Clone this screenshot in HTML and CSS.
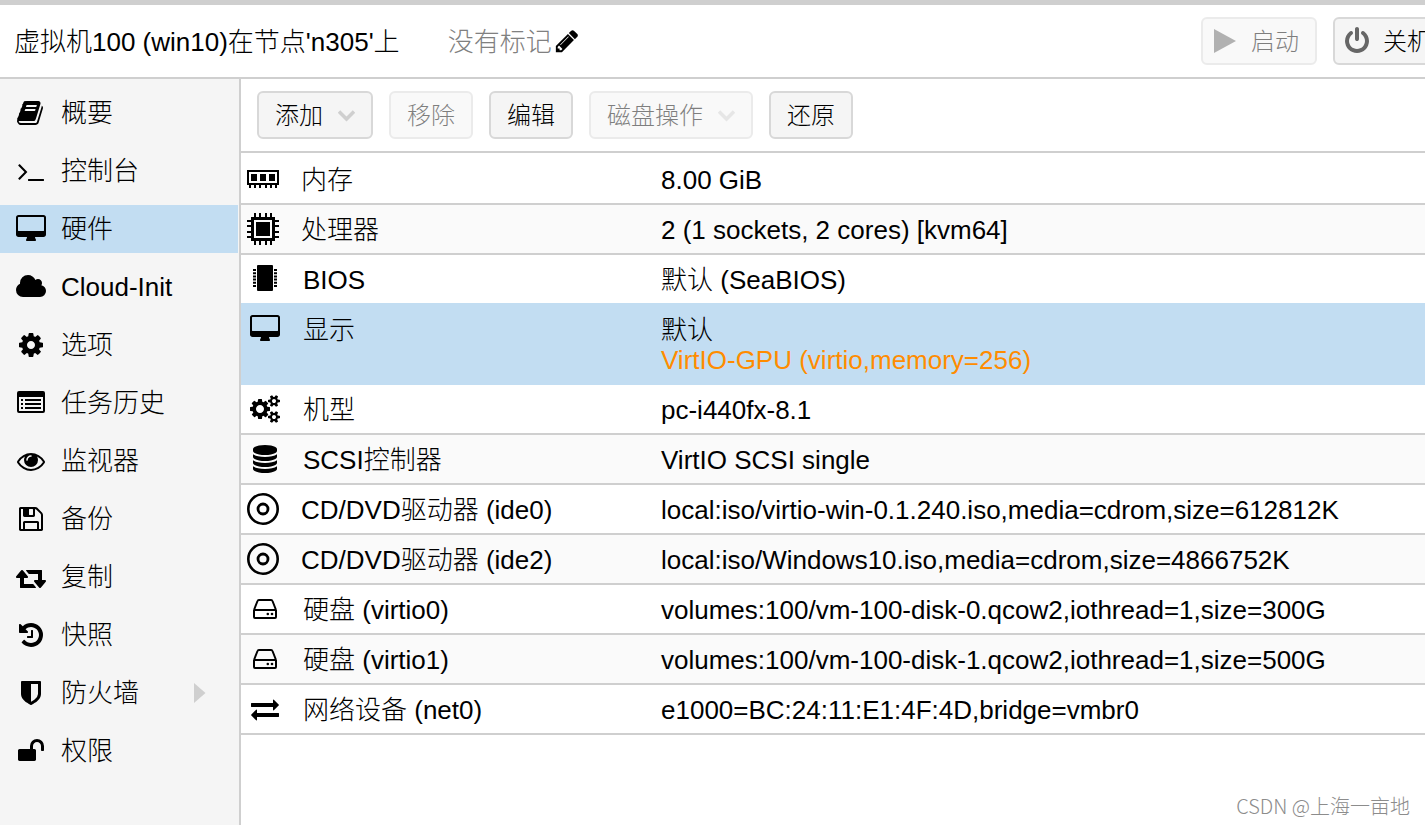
FILE: index.html
```html
<!DOCTYPE html>
<html lang="zh-CN">
<head>
<meta charset="utf-8">
<meta name="viewport" content="width=device-width, initial-scale=1">
<title>虚拟机100 - 硬件</title>
<link rel="stylesheet" href="styles.css">
</head>
<body>
<svg class="sprite" aria-hidden="true">
  <symbol id="i-book" viewBox="0 0 1792 1792"><path d="M1639 478q40 57 18 129l-275 906q-19 64-76.5 107.5t-122.5 43.5h-923q-77 0-148.5-53.5t-99.5-131.5q-24-67-2-127 0-4 3-27t4-37q1-8-3-21.5t-3-19.5q2-11 8-21t16.5-23.5 16.5-23.5q23-38 45-91.5t30-91.5q3-10 .5-30t-.5-28q3-11 17-28t17-23q21-36 42-92t25-90q1-9-2.5-32t.5-28q4-13 22-30.5t22-22.5q19-26 42.5-84.5t27.5-96.5q1-8-3-25.5t-2-26.5q2-8 9-18t18-23 17-21q8-12 16.5-30.5t15-35 16-36 19.5-32 26.5-23.5 36-11.5 47.5 5.5l-1 3q38-9 51-9h761q74 0 114 56t18 130l-274 906q-36 119-71.5 153.5t-128.5 34.5h-869q-27 0-38 15-11 16-1 43 24 70 144 70h923q29 0 56-15.5t35-41.5l300-987q7-22 5-57 38 15 59 43zm-1064 2q-4 13 2 22.5t20 9.5h608q13 0 25.5-9.5t16.5-22.5l21-64q4-13-2-22.5t-20-9.5h-608q-13 0-25.5 9.5t-16.5 22.5zm-83 256q-4 13 2 22.5t20 9.5h608q13 0 25.5-9.5t16.5-22.5l21-64q4-13-2-22.5t-20-9.5h-608q-13 0-25.5 9.5t-16.5 22.5z"/></symbol>
  <symbol id="i-terminal" viewBox="0 0 1792 1792"><path d="M649 983l-466 466q-10 10-23 10t-23-10l-50-50q-10-10-10-23t10-23l393-393-393-393q-10-10-10-23t10-23l50-50q10-10 23-10t23 10l466 466q10 10 10 23t-10 23zm1079 457v64q0 14-9 23t-23 9h-960q-14 0-23-9t-9-23v-64q0-14 9-23t23-9h960q14 0 23 9t9 23z"/></symbol>
  <symbol id="i-desktop" viewBox="-64 0 1920 1792"><path d="M1728 992v-832q0-13-9.500-22.500t-22.500-9.500h-1600q-13 0-22.500 9.500t-9.500 22.500v832q0 13 9.500 22.500t22.500 9.500h1600q13 0 22.500-9.500t9.500-22.500zm128-832v1088q0 66-47 113t-113 47h-544q0 37 16 77.500t32 71 16 43.500q0 26-19 45t-45 19h-512q-26 0-45-19t-19-45q0-14 16-44t32-70 16-78h-544q-66 0-113-47t-47-113v-1088q0-66 47-113t113-47h1600q66 0 113 47t47 113z"/></symbol>
  <symbol id="i-cloud" viewBox="-64 0 1920 1792"><path d="M1856 1152q0 159-112.5 271.5t-271.500 112.500h-1088q-185 0-316.500-131.500t-131.500-316.500q0-132 71-241.500t187-163.500q-2-28-2-43 0-212 150-362t362-150q158 0 286.500 88t187.500 230q70-62 166-62 106 0 181 75t75 181q0 75-41 138 129 30 213 134.500t84 239.500z"/></symbol>
  <symbol id="i-cog" viewBox="0 0 1792 1792"><path d="M1152 896q0-106-75-181t-181-75-181 75-75 181 75 181 181 75 181-75 75-181zm512-109v222q0 12-8 23t-20 13l-185 28q-19 54-39 91 35 50 107 138 10 12 10 25t-9 23q-27 37-99 108t-94 71q-12 0-26-9l-138-108q-44 23-91 38-16 136-29 186-7 28-36 28h-222q-14 0-24.500-8.500t-11.500-21.500l-28-184q-49-16-90-37l-141 107q-10 9-25 9-14 0-25-11-126-114-165-168-7-10-7-23 0-12 8-23 15-21 51-66.500t54-70.500q-27-50-41-99l-183-27q-13-2-21-12.500t-8-23.500v-222q0-12 8-23t19-13l186-28q14-46 39-92-40-57-107-138-10-12-10-24 0-10 9-23 26-36 98.500-107.500t94.500-71.500q13 0 26 10l138 107q44-23 91-38 16-136 29-186 7-28 36-28h222q14 0 24.500 8.500t11.500 21.500l28 184q49 16 90 37l142-107q9-9 24-9 13 0 25 10 129 119 165 170 7 8 7 22 0 12-8 23-15 21-51 66.500t-54 70.500q26 50 41 98l183 28q13 2 21 12.500t8 23.500z"/></symbol>
  <symbol id="i-list" viewBox="0 0 28 28"><path fill-rule="evenodd" d="M2 2h24a2 2 0 0 1 2 2v18a2 2 0 0 1-2 2H2a2 2 0 0 1-2-2V4a2 2 0 0 1 2-2zM2 8v13.500a.5.5 0 0 0 .5.5h23a.5.5 0 0 0 .5-.5V8z"/><path d="M4 10h2v2H4zM4 14h2v2H4zM4 18h2v2H4zM8 10h16v2H8zM8 14h16v2H8zM8 18h16v2H8z"/></symbol>
  <symbol id="i-eye" viewBox="0 0 1792 1792"><path d="M1664 960q-152-236-381-353 61 104 61 225 0 185-131.500 316.500t-316.500 131.500-316.500-131.500-131.500-316.500q0-121 61-225-229 117-381 353 133 205 333.500 326.500t434.500 121.500 434.500-121.500 333.500-326.500zm-720-384q0-20-14-34t-34-14q-125 0-214.500 89.500t-89.500 214.500q0 20 14 34t34 14 34-14 14-34q0-86 61-147t147-61q20 0 34-14t14-34zm848 384q0 34-20 69-140 230-376.500 368.500t-499.500 138.500-499.500-139-376.500-368q-20-35-20-69t20-69q140-229 376.500-368t499.500-139 499.500 139 376.500 368q20 35 20 69z"/></symbol>
  <symbol id="i-floppy" viewBox="0 0 1792 1792"><path d="M512 1536h768v-384h-768v384zm896 0h128v-896q0-14-10-38.500t-20-34.500l-281-281q-10-10-34-20t-39-10v416q0 40-28 68t-68 28h-576q-40 0-68-28t-28-68v-416h-128v1280h128v-416q0-40 28-68t68-28h832q40 0 68 28t28 68v416zm-384-928v-320q0-13-9.500-22.500t-22.500-9.500h-192q-13 0-22.500 9.500t-9.500 22.500v320q0 13 9.500 22.500t22.500 9.500h192q13 0 22.500-9.500t9.500-22.500zm640 32v928q0 40-28 68t-68 28h-1344q-40 0-68-28t-28-68v-1344q0-40 28-68t68-28h928q40 0 88 20t76 48l280 280q28 28 48 76t20 88z"/></symbol>
  <symbol id="i-retweet" viewBox="-64 0 1920 1792"><path d="M1216 1568q0 13-9.500 22.500t-22.500 9.500h-960q-8 0-13.500-2t-9-7-5.500-8-3-11.500-1-11.500v-600h-192q-26 0-45-19t-19-45q0-24 15-41l320-384q19-22 49-22t49 22l320 384q15 17 15 41 0 26-19 45t-45 19h-192v384h576q16 0 25 11l160 192q7 10 7 21zm640-416q0 24-15 41l-320 384q-20 23-49 23t-49-23l-320-384q-15-17-15-41 0-26 19-45t45-19h192v-384h-576q-16 0-25-12l-160-192q-7-9-7-20 0-13 9.500-22.500t22.500-9.500h960q8 0 13.500 2t9 7 5.500 8 3 11.500 1 11.500v600h192q26 0 45 19t19 45z"/></symbol>
  <symbol id="i-history" viewBox="0 0 1792 1792"><path d="M1664 896q0 156-61 298t-164 245-245 164-298 61q-172 0-327-72.500t-264-204.500q-7-10-6.500-22.500t8.500-20.500l137-138q10-9 25-9 16 2 23 12 73 95 179 147t225 52q104 0 198.500-40.500t163.500-109.500 109.500-163.500 40.500-198.500-40.500-198.500-109.500-163.500-163.500-109.500-198.500-40.500q-98 0-188 35.500t-160 101.500l137 138q31 30 14 69-17 40-59 40h-448q-26 0-45-19t-19-45v-448q0-42 40-59 39-17 69 14l130 129q107-101 244.500-156.500t284.500-55.500q156 0 298 61t245 164 164 245 61 298zm-640-288v448q0 14-9 23t-23 9h-320q-14 0-23-9t-9-23v-64q0-14 9-23t23-9h224v-352q0-14 9-23t23-9h64q14 0 23 9t9 23z"/></symbol>
  <symbol id="i-shield" viewBox="0 0 1792 1792"><path d="M1344 960v-640h-448v1137q119-63 213-137 235-184 235-360zm192-768v768q0 86-33.500 170.500t-83 150-118 127.500-126.500 103-121 77.500-89.500 49.500-42.500 20q-12 6-26 6t-26-6q-16-7-42.500-20t-89.500-49.500-121-77.500-126.500-103-118-127.500-83-150-33.500-170.500v-768q0-26 19-45t45-19h1152q26 0 45 19t19 45z"/></symbol>
  <symbol id="i-unlock" viewBox="0 0 1792 1792"><path d="M1728 576v256q0 26-19 45t-45 19h-64q-26 0-45-19t-19-45v-256q0-106-75-181t-181-75-181 75-75 181v192h96q40 0 68 28t28 68v576q0 40-28 68t-68 28h-960q-40 0-68-28t-28-68v-576q0-40 28-68t68-28h672v-192q0-185 131.500-316.500t316.500-131.500 316.500 131.500 131.500 316.500z"/></symbol>
  <symbol id="i-pencil" viewBox="0 0 1792 1792"><path d="M491 1536l91-91-235-235-91 91v107h128v128h107zm523-928q0-22-22-22-10 0-17 7l-542 542q-7 7-7 17 0 22 22 22 10 0 17-7l542-542q7-7 7-17zm-54-192l416 416-832 832h-416v-416zm683 96q0 53-37 90l-166 166-416-416 166-165q36-38 90-38 53 0 91 38l235 234q37 39 37 91z"/></symbol>
  <symbol id="i-power" viewBox="0 0 1792 1792"><path d="M1664 896q0 156-61 298t-164 245-245 164-298 61-298-61-245-164-164-245-61-298q0-182 80.500-343t226.500-270q43-32 95.500-25t83.500 50q32 42 24.500 94.500t-49.500 84.500q-98 74-151.500 181t-53.500 228q0 104 40.500 198.500t109.500 163.500 163.500 109.500 198.500 40.500 198.500-40.500 163.500-109.500 109.500-163.500 40.500-198.500q0-121-53.500-228t-151.500-181q-42-32-49.500-84.500t24.500-94.500q31-43 84-50t95 25q146 109 226.500 270t80.500 343zm-640-768v640q0 52-38 90t-90 38-90-38-38-90v-640q0-52 38-90t90-38 90 38 38 90z"/></symbol>
  <symbol id="i-play" viewBox="0 0 28 28"><path d="M3 2l22 12L3 26z"/></symbol>
  <symbol id="i-cogs" viewBox="-64 0 1920 1792"><path d="M832 896q0-106-75-181t-181-75-181 75-75 181 75 181 181 75 181-75 75-181zm768 512q0-52-38-90t-90-38-90 38-38 90q0 53 37.500 90.500t90.500 37.500 90.500-37.500 37.500-90.500zm0-1024q0-52-38-90t-90-38-90 38-38 90q0 53 37.500 90.500t90.500 37.500 90.500-37.500 37.500-90.500zm-384 421v185q0 10-7 19.500t-16 10.500l-155 24q-11 35-32 76 34 48 90 115 7 11 7 20 0 12-7 19-23 30-82.500 89.500t-78.500 59.500q-11 0-21-7l-115-90q-37 19-77 31-11 108-23 155-7 24-30 24h-186q-11 0-20-7.500t-10-17.500l-23-153q-34-10-75-31l-118 89q-7 7-20 7-11 0-21-8-144-133-144-160 0-9 7-19 10-14 41-53t47-61q-23-44-35-82l-152-24q-10-1-17-9.500t-7-19.500v-185q0-10 7-19.500t16-10.500l155-24q11-35 32-76-34-48-90-115-7-11-7-20 0-12 7-20 22-30 82-89t79-59q11 0 21 7l115 90q34-18 77-32 11-108 23-154 7-24 30-24h186q11 0 20 7.500t10 17.500l23 153q34 10 75 31l118-89q8-7 20-7 11 0 21 8 144 133 144 160 0 8-7 19-12 16-42 54t-45 60q23 48 34 82l152 23q10 2 17 10.500t7 19.500zm640 533v140q0 16-149 31-12 27-30 52 51 113 51 138 0 4-4 7-122 71-124 71-8 0-46-47t-52-68q-20 2-30 2t-30-2q-14 21-52 68t-46 47q-2 0-124-71-4-3-4-7 0-25 51-138-18-25-30-52-149-15-149-31v-140q0-16 149-31 13-29 30-52-51-113-51-138 0-4 4-7 4-2 35-20t59-34 30-16q8 0 46 46.500t52 67.500q20-2 30-2t30 2q51-71 92-112l6-2q4 0 124 70 4 3 4 7 0 25-51 138 17 23 30 52 149 15 149 31zm0-1024v140q0 16-149 31-12 27-30 52 51 113 51 138 0 4-4 7-122 71-124 71-8 0-46-47t-52-68q-20 2-30 2t-30-2q-14 21-52 68t-46 47q-2 0-124-71-4-3-4-7 0-25 51-138-18-25-30-52-149-15-149-31v-140q0-16 149-31 13-29 30-52-51-113-51-138 0-4 4-7 4-2 35-20t59-34 30-16q8 0 46 46.500t52 67.500q20-2 30-2t30 2q51-71 92-112l6-2q4 0 124 70 4 3 4 7 0 25-51 138 17 23 30 52 149 15 149 31z"/></symbol>
  <symbol id="i-database" viewBox="0 0 1792 1792"><path d="M896 768q237 0 443-43t325-127v170q0 69-103 128t-280 93.500-385 34.500-385-34.500-280-93.500-103-128v-170q119 84 325 127t443 43zm0 768q237 0 443-43t325-127v170q0 69-103 128t-280 93.500-385 34.500-385-34.500-280-93.500-103-128v-170q119 84 325 127t443 43zm0-384q237 0 443-43t325-127v170q0 69-103 128t-280 93.500-385 34.500-385-34.500-280-93.500-103-128v-170q119 84 325 127t443 43zm0-1152q208 0 385 34.500t280 93.500 103 128v128q0 69-103 128t-280 93.500-385 34.500-385-34.500-280-93.500-103-128v-128q0-69 103-128t280-93.500 385-34.500z"/></symbol>
  <symbol id="i-exchange" viewBox="0 0 1792 1792"><path d="M1792 1184v192q0 13-9.500 22.500t-22.500 9.500h-1376v192q0 13-9.500 22.500t-22.500 9.500q-12 0-24-10l-319-320q-9-9-9-22 0-14 9-23l320-320q9-9 23-9 13 0 22.500 9.500t9.500 22.500v192h1376q13 0 22.500 9.500t9.500 22.500zm0-544q0 14-9 23l-320 320q-9 9-23 9-13 0-22.500-9.500t-9.500-22.500v-192h-1376q-13 0-22.500-9.500t-9.500-22.500v-192q0-13 9.500-22.500t22.500-9.500h1376v-192q0-14 9-23t23-9q12 0 24 10l319 319q9 9 9 23z"/></symbol>
  <symbol id="i-hdd" viewBox="0 0 28 28"><path fill="none" stroke="currentColor" stroke-width="2" stroke-linejoin="round" d="M3 15h22v7a1 1 0 0 1-1 1H4a1 1 0 0 1-1-1zL6.500 6A1.500 1.500 0 0 1 8 5h12a1.500 1.500 0 0 1 1.500 1L25 15"/><circle cx="16.800" cy="19" r="1.300"/><circle cx="21" cy="19" r="1.300"/></symbol>
  <symbol id="i-chip" viewBox="0 0 28 28"><rect x="6" width="16" height="26" rx="1"/><path d="M2 4h3v2H2zM2 7.200h3v2H2zM2 10.400h3v2H2zM2 13.600h3v2H2zM2 16.800h3v2H2zM2 20h3v2H2zM23 4h3v2h-3zM23 7.200h3v2h-3zM23 10.400h3v2h-3zM23 13.600h3v2h-3zM23 16.800h3v2h-3zM23 20h3v2h-3z"/></symbol>
  <symbol id="i-memory" viewBox="0 0 32 32"><path fill-rule="evenodd" d="M0 7h32v15H0zM2 9v11h28V9z"/><path d="M4 11h6v7H4zM13 11h6v7h-6zM22 11h6v7h-6zM2 22h2v3H2zM7 22h2v3H7zM12 22h2v3h-2zM18 22h2v3h-2zM23 22h2v3h-2zM28 22h2v3h-2z"/></symbol>
  <symbol id="i-cpu" viewBox="0 0 32 32"><path fill-rule="evenodd" d="M4 4h24v24H4zM7 7v18h18V7z"/><path d="M9 9h14v14H9zM7 0h2v5H7zM12 0h2v5h-2zM18 0h2v5h-2zM23 0h2v5h-2zM7 27h2v5H7zM12 27h2v5h-2zM18 27h2v5h-2zM23 27h2v5h-2zM0 7h5v2H0zM0 12h5v2H0zM0 18h5v2H0zM0 23h5v2H0zM27 7h5v2h-5zM27 12h5v2h-5zM27 18h5v2h-5zM27 23h5v2h-5z"/></symbol>
  <symbol id="i-disc" viewBox="0 0 32 32"><g fill="none" stroke="currentColor"><circle cx="16" cy="16" r="14.700" stroke-width="2.600"/><circle cx="16" cy="16" r="5" stroke-width="2.800"/></g></symbol>
  <symbol id="i-chevron" viewBox="0 0 17 12"><path fill="none" stroke="currentColor" stroke-width="3.500" d="M1 1.500l7.500 7.500L16 1.500"/></symbol>
  <symbol id="i-caret" viewBox="0 0 12 20"><path d="M0 0l11.500 10L0 20z"/></symbol>
</svg>

<header class="header">
  <h1 class="title">虚拟机100 (win10)在节点'n305'上</h1>
  <div class="tags">
    <span class="tags-empty">没有标记</span>
    <button class="tag-edit" type="button" aria-label="编辑标记"><svg><use href="#i-pencil"/></svg></button>
  </div>
  <div class="actions">
    <button class="btn btn-icon" type="button" disabled><svg class="icon"><use href="#i-play"/></svg>启动</button>
    <button class="btn btn-icon" type="button"><svg class="icon"><use href="#i-power"/></svg>关机</button>
  </div>
</header>

<div class="body">
  <nav class="sidebar">
    <a class="nav-item" href="#summary"><svg class="icon"><use href="#i-book"/></svg>概要</a>
    <a class="nav-item" href="#console"><svg class="icon"><use href="#i-terminal"/></svg>控制台</a>
    <a class="nav-item selected" href="#hardware" aria-current="page"><svg class="icon"><use href="#i-desktop"/></svg>硬件</a>
    <a class="nav-item" href="#cloudinit"><svg class="icon"><use href="#i-cloud"/></svg>Cloud-Init</a>
    <a class="nav-item" href="#options"><svg class="icon"><use href="#i-cog"/></svg>选项</a>
    <a class="nav-item" href="#tasks"><svg class="icon"><use href="#i-list"/></svg>任务历史</a>
    <a class="nav-item" href="#monitor"><svg class="icon"><use href="#i-eye"/></svg>监视器</a>
    <a class="nav-item" href="#backup"><svg class="icon"><use href="#i-floppy"/></svg>备份</a>
    <a class="nav-item" href="#replication"><svg class="icon"><use href="#i-retweet"/></svg>复制</a>
    <a class="nav-item" href="#snapshots"><svg class="icon"><use href="#i-history"/></svg>快照</a>
    <a class="nav-item" href="#firewall"><svg class="icon"><use href="#i-shield"/></svg>防火墙<svg class="caret"><use href="#i-caret"/></svg></a>
    <a class="nav-item" href="#permissions"><svg class="icon"><use href="#i-unlock"/></svg>权限</a>
  </nav>

  <main class="main">
    <div class="toolbar">
      <button class="btn" type="button">添加<svg class="chevron"><use href="#i-chevron"/></svg></button>
      <button class="btn" type="button" disabled>移除</button>
      <button class="btn" type="button">编辑</button>
      <button class="btn" type="button" disabled>磁盘操作<svg class="chevron"><use href="#i-chevron"/></svg></button>
      <button class="btn" type="button">还原</button>
    </div>
    <div class="grid">
      <table class="table">
        <tbody>
          <tr><th scope="row"><span class="name wide"><svg class="icon"><use href="#i-memory"/></svg>内存</span></th><td>8.00 GiB</td></tr>
          <tr><th scope="row"><span class="name wide"><svg class="icon"><use href="#i-cpu"/></svg>处理器</span></th><td>2 (1 sockets, 2 cores) [kvm64]</td></tr>
          <tr class="before-selected"><th scope="row"><span class="name"><svg class="icon"><use href="#i-chip"/></svg>BIOS</span></th><td>默认 (SeaBIOS)</td></tr>
          <tr class="selected"><th scope="row"><span class="name"><svg class="icon"><use href="#i-desktop"/></svg>显示</span></th><td>默认<div class="pending">VirtIO-GPU (virtio,memory=256)</div></td></tr>
          <tr><th scope="row"><span class="name"><svg class="icon"><use href="#i-cogs"/></svg>机型</span></th><td>pc-i440fx-8.1</td></tr>
          <tr><th scope="row"><span class="name"><svg class="icon"><use href="#i-database"/></svg>SCSI控制器</span></th><td>VirtIO SCSI single</td></tr>
          <tr><th scope="row"><span class="name wide"><svg class="icon"><use href="#i-disc"/></svg>CD/DVD驱动器 (ide0)</span></th><td>local:iso/virtio-win-0.1.240.iso,media=cdrom,size=612812K</td></tr>
          <tr><th scope="row"><span class="name wide"><svg class="icon"><use href="#i-disc"/></svg>CD/DVD驱动器 (ide2)</span></th><td>local:iso/Windows10.iso,media=cdrom,size=4866752K</td></tr>
          <tr><th scope="row"><span class="name"><svg class="icon"><use href="#i-hdd"/></svg>硬盘 (virtio0)</span></th><td>volumes:100/vm-100-disk-0.qcow2,iothread=1,size=300G</td></tr>
          <tr><th scope="row"><span class="name"><svg class="icon"><use href="#i-hdd"/></svg>硬盘 (virtio1)</span></th><td>volumes:100/vm-100-disk-1.qcow2,iothread=1,size=500G</td></tr>
          <tr><th scope="row"><span class="name"><svg class="icon"><use href="#i-exchange"/></svg>网络设备 (net0)</span></th><td>e1000=BC:24:11:E1:4F:4D,bridge=vmbr0</td></tr>
        </tbody>
      </table>
    </div>
  </main>
</div>
<div class="watermark">CSDN @上海一亩地</div>
</body>
</html>
```
FILE: styles.css
```css
* {
  box-sizing: border-box;
}

body {
  margin: 0;
  min-height: 100vh;
  display: flex;
  flex-direction: column;
  background: #fff;
  color: #000;
  font: 300 26px/30px "Liberation Sans", "Noto Sans CJK SC", sans-serif;
}

svg {
  display: block;
  flex: none;
  fill: currentColor;
}

.sprite {
  position: absolute;
  width: 0;
  height: 0;
}

.icon {
  width: 30px;
  height: 28px;
}

/* Header */
.header {
  display: flex;
  align-items: center;
  height: 79px;
  padding-left: 14px;
  border-top: 5px solid #cfcfcf;
  border-bottom: 2px solid #cfcfcf;
  white-space: nowrap;
}

.title {
  margin: 0;
  padding-top: 2px;
  font: inherit;
}

.tags {
  display: flex;
  align-items: center;
  margin-left: 48px;
}

.tags-empty {
  padding-top: 2px;
  color: #808080;
}

.tag-edit {
  padding: 0 2px;
  border: 0;
  background: none;
  color: #000;
}

.tag-edit svg {
  width: 26px;
  height: 26px;
}

.actions {
  display: flex;
  gap: 16px;
  flex: none;
  width: 224px;
  margin-left: auto;
  overflow: hidden;
}

/* Buttons */
.btn {
  display: flex;
  align-items: center;
  flex: none;
  height: 48px;
  padding: 2px 16px 0;
  border: 2px solid #d8d8d8;
  border-radius: 6px;
  background: #f5f5f5;
  color: #000;
  font: inherit;
  font-size: 24px;
  white-space: nowrap;
}

.btn:disabled {
  opacity: 0.5;
}

.btn-icon {
  gap: 12px;
  padding: 2px 16px 0 8px;
}

.btn-icon .icon {
  width: 28px;
  margin-bottom: 2px;
  color: #666;
}

.chevron {
  width: 17px;
  height: 12px;
  margin-left: 15px;
  color: #cfcfcf;
}

/* Sidebar */
.body {
  display: flex;
  flex: 1;
}

.sidebar {
  display: flex;
  flex-direction: column;
  flex: none;
  gap: 10px;
  width: 241px;
  padding: 10px 1px 10px 0;
  border-right: 2px solid #cfcfcf;
  background: #f5f5f5;
}

.nav-item {
  display: flex;
  align-items: center;
  gap: 15px;
  height: 48px;
  padding: 0 32px 0 16px;
  color: inherit;
  text-decoration: none;
}

.selected {
  background: #c2ddf2;
}

.caret {
  width: 12px;
  height: 20px;
  margin-left: auto;
  color: #cfcfcf;
}

/* Hardware list */
.main {
  flex: 1;
  min-width: 0;
}

.toolbar {
  display: flex;
  gap: 16px;
  padding: 12px 16px;
  border-bottom: 2px solid #cfcfcf;
}

.grid {
  padding-top: 2px;
  overflow: hidden;
}

.table {
  width: 100%;
  border-collapse: separate;
  border-spacing: 0;
  table-layout: fixed;
}

.table th,
.table td {
  padding: 10px 6px 8px;
  border-bottom: 2px solid #cfcfcf;
  font-weight: inherit;
  text-align: left;
  vertical-align: top;
  white-space: nowrap;
}

.table th {
  width: 414px;
}

.table tr:nth-child(even):not(.selected) {
  background: #fafafa;
}

.table .before-selected > *,
.table .selected > * {
  border-bottom-color: #c2ddf2;
}

.name {
  display: flex;
  align-items: center;
  gap: 23px;
  height: 30px;
  padding-left: 3px;
}

.name.wide {
  gap: 22px;
  padding-left: 0;
}

.name .icon {
  margin-bottom: 2px;
}

.wide .icon {
  width: 32px;
  height: 32px;
}

.pending {
  color: #ff8c00;
}

.watermark {
  position: absolute;
  right: 15px;
  bottom: 4px;
  color: #8c8c8c;
  font-family: "Noto Sans CJK SC", sans-serif;
  font-size: 20px;
}
```
